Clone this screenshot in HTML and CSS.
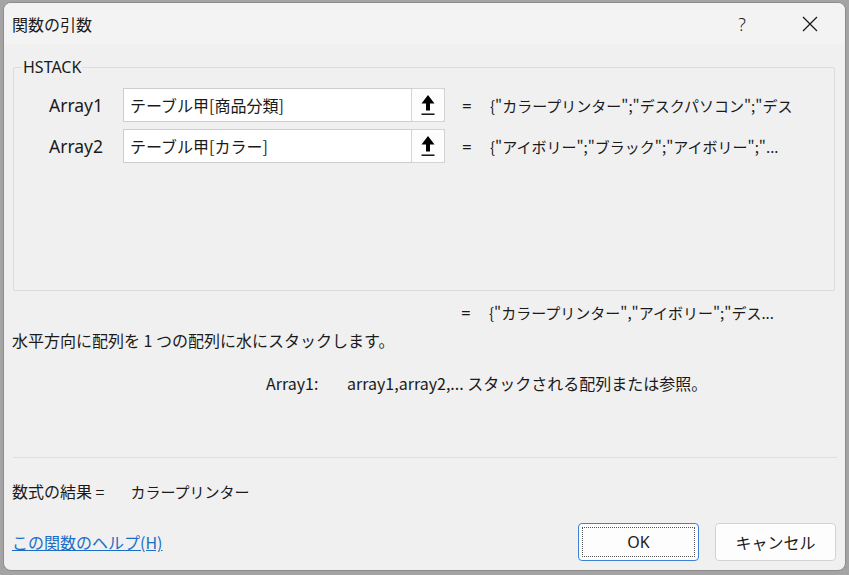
FILE: index.html
```html
<!DOCTYPE html>
<html lang="ja">
<head>
  <meta charset="UTF-8">
  <title>関数の引数</title>
  <link rel="stylesheet" href="styles.css">
</head>
<body>
  <div class="dialog">
    <!-- タイトルバー -->
    <div class="titlebar">
      <span class="title">関数の引数</span>
      <span class="help-btn">?</span>
      <span class="close-btn">
        <svg width="16" height="16" viewBox="0 0 16 16"><path d="M1 1L15 15M15 1L1 15" stroke="#1a1a1a" stroke-width="1.3" fill="none"/></svg>
      </span>
    </div>

    <div class="content">
      <fieldset class="args">
        <legend>HSTACK</legend>
        <div class="arg-rows">
          <div class="arg-row">
            <label class="arg-name">Array1</label>
            <div class="arg-input">
              <span class="arg-text">テーブル甲[商品分類]</span>
              <span class="ref-btn">
                <svg width="16" height="22" viewBox="0 0 16 22"><path d="M8 1L1.5 9.5H6V16.5H10V9.5H14.5Z" fill="#000"/><rect x="1.5" y="19.5" width="13" height="1.4" fill="#000"/></svg>
              </span>
            </div>
            <span class="eq">=</span>
            <span class="arg-value">{"カラープリンター";"デスクパソコン";"デス</span>
          </div>
          <div class="arg-row">
            <label class="arg-name">Array2</label>
            <div class="arg-input">
              <span class="arg-text">テーブル甲[カラー]</span>
              <span class="ref-btn">
                <svg width="16" height="22" viewBox="0 0 16 22"><path d="M8 1L1.5 9.5H6V16.5H10V9.5H14.5Z" fill="#000"/><rect x="1.5" y="19.5" width="13" height="1.4" fill="#000"/></svg>
              </span>
            </div>
            <span class="eq">=</span>
            <span class="arg-value">{"アイボリー";"ブラック";"アイボリー";"...</span>
          </div>
        </div>
      </fieldset>

      <div class="result-row">
        <span class="eq">=</span>
        <span class="arg-value">{"カラープリンター","アイボリー";"デス...</span>
      </div>

      <p class="desc">水平方向に配列を 1 つの配列に水にスタックします。</p>

      <p class="arg-desc"><span class="arg-desc-name">Array1:</span>array1,array2,... スタックされる配列または参照。</p>

      <hr class="sep">

      <p class="formula">数式の結果 =<span class="formula-value">カラープリンター</span></p>

      <div class="footer">
        <a class="help-link" href="#">この関数のヘルプ(H)</a>
        <div class="buttons">
          <button class="btn btn-ok"><span class="focus">OK</span></button>
          <button class="btn">キャンセル</button>
        </div>
      </div>
    </div>
  </div>
</body>
</html>
```

FILE: styles.css
```css
/* 全体 */
*, *::before, *::after { box-sizing: border-box; }
body {
  margin: 0;
  padding: 2px 0 0 3px;
  height: 575px;
  overflow: hidden;
  background: #a4a4a4;
  font-family: "Noto Sans", "Noto Sans CJK JP", sans-serif;
  font-size: 17px;
  color: #1a1a1a;
}

/* ダイアログ本体 */
.dialog {
  width: 843px;
  height: 569px;
  background: #f0f0f0;
  border: 1px solid #8c8c8c;
  border-radius: 8px;
  overflow: hidden;
  display: flex;
  flex-direction: column;
}

/* タイトルバー */
.titlebar {
  height: 41px;
  flex: none;
  display: flex;
  align-items: center;
  padding-left: 8px;
  background: #f3f3f3;
}
.title {
  flex: 1;
  font-family: "Noto Sans CJK JP", sans-serif;
  font-size: 16px;
}
.help-btn {
  width: 20px;
  text-align: center;
  margin-right: 50px;
  font-size: 18px;
  font-weight: 300;
}
.close-btn {
  display: flex;
  margin-right: 27px;
}

.content {
  flex: 1;
  padding: 13px 9px 0 8px;
  display: flex;
  flex-direction: column;
}

/* 引数グループ */
.args {
  margin: 0 0 0 1px;
  padding: 0;
  border: 1px solid #dcdcdc;
  border-radius: 2px;
  width: 822px;
}
.args legend {
  margin-left: 8px;
  padding: 0 1px;
  line-height: 20px;
  font-size: 16px;
}
.arg-rows {
  height: 213px;
  padding-top: 11px;
  display: flex;
  flex-direction: column;
  gap: 7px;
}
.arg-row {
  display: flex;
  align-items: center;
  height: 34px;
}
.arg-name {
  width: 109px;
  padding-left: 35px;
  font-size: 17.5px;
}
.arg-input {
  width: 322px;
  height: 34px;
  display: flex;
  background: #fff;
  border: 1px solid #cdcdcd;
}
.arg-text {
  flex: 1;
  padding-left: 6px;
  line-height: 32px;
  font-family: "Noto Sans CJK JP", sans-serif;
  font-size: 16px;
}
.ref-btn {
  width: 34px;
  margin: -1px -1px -1px 0;
  display: flex;
  align-items: center;
  justify-content: center;
  background: #fdfdfd;
  border: 1px solid #d4d4d4;
  border-radius: 2px;
}
.eq {
  width: 28px;
  margin-left: 17px;
}
.arg-value {
  width: 302px;
  white-space: nowrap;
  overflow: hidden;
  font-family: "Noto Sans CJK JP", sans-serif;
  font-size: 15px;
}

/* 結果と説明 */
.result-row {
  display: flex;
  align-items: center;
  height: 22px;
  margin-top: 10px;
  padding-left: 432px;
}
.desc,
.arg-desc,
.formula {
  margin: 0;
  line-height: 22px;
  font-family: "Noto Sans CJK JP", sans-serif;
  font-size: 16px;
  white-space: nowrap;
}
.desc {
  margin-top: 6px;
}
.arg-desc {
  margin-top: 21px;
  padding-left: 254px;
}
.arg-desc-name {
  display: inline-block;
  width: 81px;
}
.sep {
  margin: 63px 0 0 1px;
  width: 824px;
  border: none;
  border-top: 1px solid #dfdfdf;
}
.formula {
  margin-top: 22px;
}
.formula-value {
  margin-left: 26px;
  font-size: 15px;
}

/* フッター */
.footer {
  margin-top: 20px;
  display: flex;
  align-items: center;
  justify-content: space-between;
}
.help-link {
  color: #1a6ec8;
  font-family: "Noto Sans CJK JP", sans-serif;
  font-size: 16px;
}
.buttons {
  display: flex;
  gap: 16px;
}
.btn {
  width: 121px;
  height: 38px;
  padding: 0;
  background: #fdfdfd;
  border: 1px solid #d3d3d3;
  border-radius: 4px;
  font-family: "Noto Sans", "Noto Sans CJK JP", sans-serif;
  font-size: 16px;
  color: #1a1a1a;
}
.btn-ok {
  padding: 3px;
  border-color: #3d82d6;
}
.btn-ok .focus {
  display: flex;
  align-items: center;
  justify-content: center;
  height: 100%;
  border: 1px dotted #555;
}
```
